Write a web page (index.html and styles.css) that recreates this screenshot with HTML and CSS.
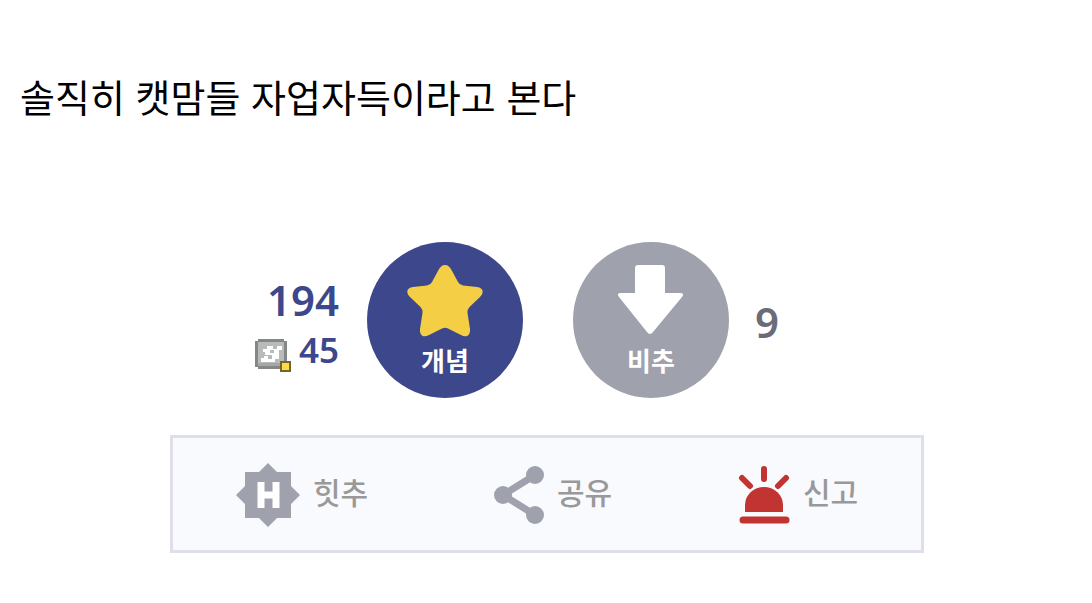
FILE: index.html
```html
<!DOCTYPE html>
<html lang="ko">
<head>
<meta charset="utf-8">
<meta name="viewport" content="width=device-width, initial-scale=1">
<title>게시글</title>
<link rel="stylesheet" href="styles.css">
</head>
<body>
<main class="post">
  <p class="post-text">솔직히 캣맘들 자업자득이라고 본다</p>

  <section class="votes">
    <div class="up-counts">
      <span class="count">194</span>
      <span class="member-count">
        <svg class="member-icon" viewBox="0 0 36 34" aria-hidden="true">
          <path fill="#858786" d="M3 0h26v2h3v26h-3v2H3v-2H0V2h3z"/>
          <path fill="#b9bbba" d="M3 3h26v24H3z"/>
          <path fill="#a5a7a6" d="M3 24h26v3H3z"/>
          <path fill="#fff" d="M12 7h6v3h4V7h5v4h-3v9h-4v3H6v-4h3v-2h4v3h4v-4h-7v-3H8v-3h4zM15 11v3h4v-3z" fill-rule="evenodd"/>
          <path fill="#76652b" d="M25 22h11v11H25z"/>
          <path fill="#fbdc48" d="M27 24h7v7h-7z"/>
        </svg>
        <span>45</span>
      </span>
    </div>
    <button class="vote vote-up" type="button">
      <svg class="vote-icon" viewBox="0 0 80 76" aria-hidden="true">
        <path fill="#f4cf46" d="M40 1C43 1 45 3 46.500 6L53 18Q54.500 21 58 21.500L72 23C79 24 79 29 75 33L64.500 43Q62 45.500 62.500 49L65 65C65.500 72 61 74 56 71L43 64.500Q40 63 37 64.500L24 71C19 74 14.500 72 15 65L17.500 49Q18 45.500 15.500 43L5 33C1 29 1 24 8 23L22 21.500Q25.500 21 27 18L33.500 6C35 3 37 1 40 1Z"/>
      </svg>
      <span class="vote-label">개념</span>
    </button>
    <button class="vote vote-down" type="button">
      <svg class="vote-icon" viewBox="0 0 80 76" aria-hidden="true">
        <path fill="#fff" d="M27 1h24q3 0 3 3v25h15q5 0 2 4L42 68q-3 4-6 0L8 33q-3-4 2-4h14V4q0-3 3-3z"/>
      </svg>
      <span class="vote-label">비추</span>
    </button>
    <span class="down-count">9</span>
  </section>

  <nav class="actions">
    <button class="action" type="button">
      <svg class="icon-hit" viewBox="0 0 64 64" aria-hidden="true">
        <path fill="#9fa1ac" d="M32 0l9 9h14v14l9 9-9 9v14H41l-9 9-9-9H9V41l-9-9 9-9V9h14z"/>
        <path fill="none" stroke="#fff" stroke-width="7" d="M25 19v26M40 19v26M25 32h15"/>
      </svg>
      <span>힛추</span>
    </button>
    <button class="action" type="button">
      <svg class="icon-share" viewBox="0 0 50 58" aria-hidden="true">
        <path fill="none" stroke="#9fa1ac" stroke-width="7" d="M41 9L9 29l32 20"/>
        <g fill="#9fa1ac"><circle cx="41" cy="9" r="9"/><circle cx="9" cy="29" r="9"/><circle cx="41" cy="49" r="9"/></g>
      </svg>
      <span>공유</span>
    </button>
    <button class="action" type="button">
      <svg class="icon-report" viewBox="0 0 52 58" aria-hidden="true">
        <path fill="#c23431" d="M7 46V39a19 18 0 0 1 38 0v7z"/>
        <path fill="none" stroke="#c23431" stroke-width="6" stroke-linecap="round" d="M26 3v10M4 12l8 8M48 12l-8 8"/>
        <path fill="none" stroke="#c23431" stroke-width="7" stroke-linecap="round" d="M5 54h43"/>
      </svg>
      <span>신고</span>
    </button>
  </nav>
</main>
</body>
</html>
```
FILE: styles.css
```css
* {
  box-sizing: border-box;
}

body {
  margin: 0;
  background: #fff;
  color: #000;
  font-family: "Noto Sans CJK KR", sans-serif;
}

button {
  padding: 0;
  border: 0;
  background: none;
  font: inherit;
  cursor: pointer;
}

svg {
  display: block;
  flex: none;
}

.post {
  padding: 68px 18px 48px 20px;
}

.post-text {
  margin: 0;
  font-size: 38px;
  line-height: 56px;
}

.votes {
  display: grid;
  grid-template-columns: 1fr auto auto 1fr;
  align-items: center;
  margin-top: 118px;
  padding-left: 2px;
  font-family: "Noto Sans", "Noto Sans CJK KR", sans-serif;
  font-weight: 600;
}

.up-counts {
  display: flex;
  flex-direction: column;
  align-items: flex-end;
  margin-right: 28px;
  padding-top: 8px;
  color: #3d478c;
}

.count {
  font-size: 42px;
  line-height: 52px;
}

.member-count {
  display: flex;
  align-items: center;
  gap: 8px;
  font-size: 35px;
  line-height: 48px;
}

.member-icon {
  width: 36px;
  height: 34px;
  margin-top: 12px;
}

.vote {
  display: flex;
  flex-direction: column;
  align-items: center;
  width: 156px;
  height: 156px;
  padding-top: 22px;
  border-radius: 50%;
  color: #fff;
}

.vote-up {
  margin-right: 50px;
  background: #3d478c;
}

.vote-down {
  background: #9fa1ac;
}

.vote-icon {
  width: 80px;
  height: 76px;
}

.vote-label {
  font-family: "Noto Sans CJK KR", sans-serif;
  font-size: 26px;
  font-weight: 700;
  line-height: 40px;
}

.down-count {
  margin-left: 26px;
  padding-top: 4px;
  color: #6b6c78;
  font-size: 42px;
  line-height: 52px;
}

.actions {
  display: flex;
  align-items: center;
  justify-content: space-around;
  max-width: 754px;
  min-height: 118px;
  margin: 37px auto 0;
  padding-top: 2px;
  border: 3px solid #dfdfea;
  background: #f9fafd;
}

.action {
  display: flex;
  align-items: center;
  gap: 13px;
  color: #999;
  font-size: 30px;
  font-weight: 500;
  line-height: 44px;
}

.action span {
  padding-bottom: 8px;
}

.icon-hit {
  width: 64px;
  height: 64px;
}

.icon-share {
  width: 50px;
  height: 58px;
}

.icon-report {
  width: 52px;
  height: 58px;
}
```
